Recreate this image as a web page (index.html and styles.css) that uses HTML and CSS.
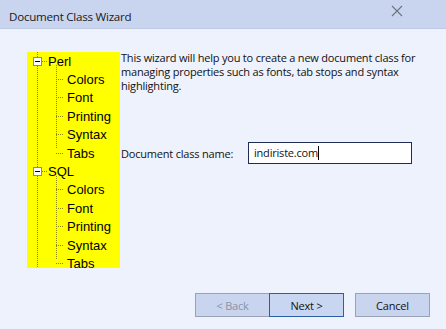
FILE: index.html
```html
<!DOCTYPE html>
<html>
	<head>
		<meta charset="utf-8">
		<title>Document Class Wizard</title>
		<link rel="stylesheet" href="styles.css">
	</head>
	<body>
		<div class="dialog">
			<!-- title bar -->
			<div class="titleBar">
				<span class="titleText">Document Class Wizard</span>
				<svg class="closeIcon" width="12" height="12" viewBox="0 0 12 12">
					<path d="M1 1L11 11M11 1L1 11" stroke="#6b7280" stroke-width="1.1" fill="none"/>
				</svg>
			</div>
			<div class="mainNode">
				<!-- tree -->
				<div class="treeNode">
					<div class="treeGroup">
						<div class="treeRoot"><span class="minusBox"></span><span class="hDot"></span><span class="label">Perl</span></div>
						<div class="treeKids">
							<div class="treeLeaf"><span class="hDot"></span><span class="label">Colors</span></div>
							<div class="treeLeaf"><span class="hDot"></span><span class="label">Font</span></div>
							<div class="treeLeaf"><span class="hDot"></span><span class="label">Printing</span></div>
							<div class="treeLeaf"><span class="hDot"></span><span class="label">Syntax</span></div>
							<div class="treeLeaf last"><span class="hDot"></span><span class="label">Tabs</span></div>
						</div>
					</div>
					<div class="treeGroup">
						<div class="treeRoot"><span class="minusBox"></span><span class="hDot"></span><span class="label">SQL</span></div>
						<div class="treeKids">
							<div class="treeLeaf"><span class="hDot"></span><span class="label">Colors</span></div>
							<div class="treeLeaf"><span class="hDot"></span><span class="label">Font</span></div>
							<div class="treeLeaf"><span class="hDot"></span><span class="label">Printing</span></div>
							<div class="treeLeaf"><span class="hDot"></span><span class="label">Syntax</span></div>
							<div class="treeLeaf last"><span class="hDot"></span><span class="label">Tabs</span></div>
						</div>
					</div>
				</div>
				<!-- right side -->
				<div class="infoNode">
					<p class="intro">This wizard will help you to create a new document class for managing properties such as fonts, tab stops and syntax highlighting.</p>
					<div class="nameRow">
						<label class="nameLabel">Document class name:</label>
						<div class="nameInput">indiriste.com<span class="caret"></span></div>
					</div>
				</div>
			</div>
			<!-- buttons -->
			<div class="btnRow">
				<div class="btn disabled">&lt; Back</div>
				<div class="btn active">Next &gt;</div>
				<div class="btn cancel">Cancel</div>
			</div>
		</div>
	</body>
</html>
```

FILE: styles.css
```css
* {
	margin: 0;
	padding: 0;
	box-sizing: border-box;
}

body {
	width: 446px;
	height: 329px;
	background: #eef2fc;
	font-family: "Open Sans", "Noto Sans", sans-serif;
	overflow: hidden;
}

.dialog {
	width: 446px;
	height: 329px;
	display: flex;
	flex-direction: column;
}

.titleBar {
	height: 29px;
	background: #c9d4ef;
	border-bottom: 1px solid #bfcae6;
	display: flex;
	align-items: center;
	justify-content: space-between;
	padding: 2px 43px 0 9px;
}

.titleText {
	font-size: 11.6px;
	letter-spacing: -0.25px;
	color: #1a1a1a;
	margin-top: 3px;
}

.closeIcon {
	margin-top: -8px;
}

.mainNode {
	display: flex;
	padding: 23px 0 0 27px;
	height: 245px;
}

/* tree */
.treeNode {
	width: 93px;
	height: 216px;
	position: relative;
	font-family: "Liberation Sans", Arial, sans-serif;
	font-size: 13px;
	color: #000;
	background-image: linear-gradient(#8a8a00 50%, transparent 50%);
	background-size: 1px 2px;
	background-repeat: repeat-y;
	background-position: 10px 0;
	background-color: #ffff00;
}

.treeRoot, .treeLeaf {
	height: 18.4px;
	display: flex;
	align-items: center;
	position: relative;
}

.treeRoot {
	padding-left: 6px;
}

.minusBox {
	width: 9px;
	height: 9px;
	border: 1px solid #8a8a8a;
	background: #ffffff;
	position: relative;
	z-index: 1;
}

.minusBox::after {
	content: "";
	position: absolute;
	left: 1px;
	top: 3px;
	width: 5px;
	height: 1px;
	background: #000;
}

.hDot {
	width: 5px;
	height: 1px;
	background-image: linear-gradient(90deg, #8a8a00 50%, transparent 50%);
	background-size: 2px 1px;
	margin-right: 1px;
}

.treeKids {
	position: relative;
	padding-left: 29px;
}

.treeKids::before {
	content: "";
	position: absolute;
	left: 29px;
	top: -5px;
	width: 1px;
	height: 83px;
	background-image: linear-gradient(#8a8a00 50%, transparent 50%);
	background-size: 1px 2px;
}

.treeLeaf .hDot {
	width: 8px;
	margin-right: 3px;
}

.label {
	line-height: 15px;
}

/* right side */
.infoNode {
	padding-left: 1px;
	width: 300px;
}

.intro {
	font-size: 11px;
	letter-spacing: -0.2px;
	line-height: 14px;
	color: #111;
	margin-top: -1px;
}

.nameRow {
	display: flex;
	align-items: center;
	margin-top: 49px;
}

.nameLabel {
	font-size: 11px;
	letter-spacing: -0.2px;
	color: #111;
	width: 127px;
}

.nameInput {
	width: 164px;
	height: 22px;
	border: 1px solid #1f2d55;
	background: #ffffff;
	font-size: 11px;
	letter-spacing: -0.2px;
	color: #111;
	padding: 2px 0 0 5px;
	display: flex;
	align-items: flex-start;
}

.caret {
	width: 1px;
	height: 14px;
	background: #000;
	margin-top: 1px;
}

/* buttons */
.btnRow {
	display: flex;
	padding: 19px 0 0 195px;
}

.btn {
	width: 75px;
	height: 24px;
	background: #c9d4ef;
	border: 1px solid #9aa3b5;
	font-size: 11px;
	letter-spacing: -0.2px;
	color: #111;
	display: flex;
	align-items: center;
	justify-content: center;
}

.btn.disabled {
	color: #8a93a8;
}

.btn.active {
	border-color: #2b5fa8;
	margin-left: -1px;
	background: #c9d6f2;
}

.btn.cancel {
	margin-left: 11px;
}
```
